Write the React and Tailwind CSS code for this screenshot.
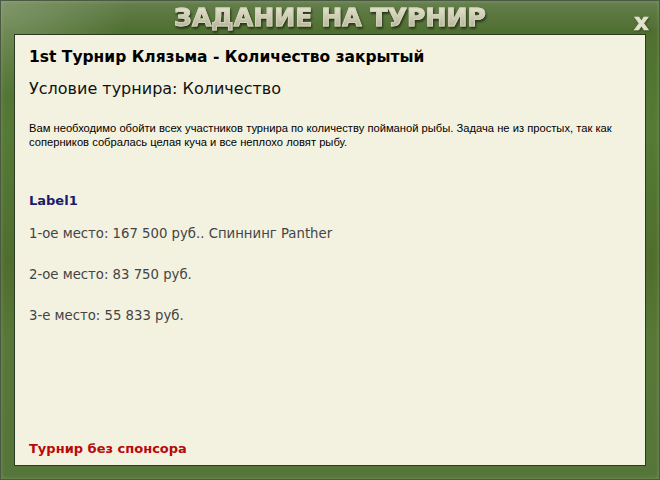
export default function App() {
  return (
    <div className="w-[660px] h-[480px] flex flex-col border border-[#4a5a40] shadow-[inset_0_0_4px_rgba(190,200,170,0.35)] bg-[radial-gradient(ellipse_at_top_left,#7f9668_0%,transparent_14%),linear-gradient(to_bottom,#667f4e_0px,#4f6f30_30px,#557a35_130px,#4f6e2e_260px,#587838_340px,#55753a_100%)]">
      <header className="relative h-[33px] shrink-0 flex justify-center">
        <h1 className="mt-[3px] h-[28px] text-[25px] leading-[28px] font-black tracking-[0.1px] text-center bg-gradient-to-b from-[#ecebd6] to-[#a8a98c] bg-clip-text text-transparent drop-shadow-[1px_2px_1px_rgba(30,42,18,0.85)] [font-family:'DejaVu_Sans',sans-serif] [-webkit-text-stroke:1px_#d4d3ba]">
          ЗАДАНИЕ НА ТУРНИР
        </h1>
        <span className="absolute left-[633px] top-[7px] text-[23px] leading-[28px] font-bold text-[#e2e1cb] drop-shadow-[1px_1px_1px_rgba(40,55,25,0.7)] [font-family:'DejaVu_Sans',sans-serif] [-webkit-text-stroke:0.6px_#e2e1cb]">
          x
        </span>
      </header>
      <main className="mx-[13px] w-[632px] h-[432px] flex flex-col border border-[#2c3a22] bg-[#f3f2e0] pl-[14px] pr-[10px] [font-family:'DejaVu_Sans',Verdana,sans-serif]">
        <h2 className="mt-[12px] text-[15.5px] leading-[20px] font-bold text-black">1st Турнир Клязьма - Количество закрытый</h2>
        <p className="mt-[11px] text-[16px] leading-[22px] text-[#111]">Условие турнира: Количество</p>
        <p className="mt-[21px] text-[11.2px] leading-[14px] text-black [font-family:'Liberation_Sans',Arial,sans-serif]">
          Вам необходимо обойти всех участников турнира по количеству пойманой рыбы. Задача не из простых, так как соперников собралась целая куча и все неплохо ловят рыбу.
        </p>
        <h3 className="mt-[43px] text-[13px] leading-[18px] font-bold text-[#1a1a6e]">Label1</h3>
        <p className="mt-[15px] text-[13.25px] leading-[18px] text-[#444]">1-ое место: 167 500 руб.. Спиннинг Panther</p>
        <p className="mt-[23px] text-[13.25px] leading-[18px] text-[#444]">2-ое место: 83 750 руб.</p>
        <p className="mt-[23px] text-[13.25px] leading-[18px] text-[#444]">3-е место: 55 833 руб.</p>
        <p className="mt-auto mb-[7px] text-[13px] leading-[18px] font-bold text-[#b80a0a]">Турнир без спонсора</p>
      </main>
    </div>
  )
}
